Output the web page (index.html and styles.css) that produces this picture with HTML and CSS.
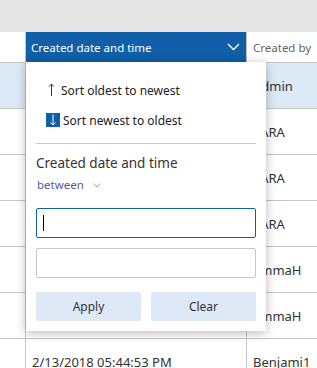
FILE: index.html
```html
<!DOCTYPE html>
<html lang="en">
  <head>
    <meta charset="UTF-8" />
    <title>Created date filter</title>
    <link rel="stylesheet" href="styles.css">
  </head>
  <body>
    <div class="topbar"></div>

    <div class="grid">
      <!-- header row -->
      <div class="row head">
        <div class="cell check"></div>
        <div class="cell date active">
          <span>Created date and time</span>
          <svg class="chev" width="13" height="8" viewBox="0 0 13 8">
            <path d="M1 1 L6.5 6.5 L12 1" fill="none" stroke="#fff" stroke-width="1.4"/>
          </svg>
        </div>
        <div class="cell by">Created by</div>
      </div>

      <div class="row selected">
        <div class="cell check"></div>
        <div class="cell date">2/13/2018 05:52:10 PM</div>
        <div class="cell by">Admin</div>
      </div>
      <div class="row">
        <div class="cell check"></div>
        <div class="cell date">2/13/2018 05:51:32 PM</div>
        <div class="cell by">SARA</div>
      </div>
      <div class="row">
        <div class="cell check"></div>
        <div class="cell date">2/13/2018 05:50:08 PM</div>
        <div class="cell by">SARA</div>
      </div>
      <div class="row">
        <div class="cell check"></div>
        <div class="cell date">2/13/2018 05:48:41 PM</div>
        <div class="cell by">SARA</div>
      </div>
      <div class="row">
        <div class="cell check"></div>
        <div class="cell date">2/13/2018 05:47:19 PM</div>
        <div class="cell by">EmmaH</div>
      </div>
      <div class="row">
        <div class="cell check"></div>
        <div class="cell date">2/13/2018 05:46:02 PM</div>
        <div class="cell by">EmmaH</div>
      </div>
      <div class="row">
        <div class="cell check"></div>
        <div class="cell date">2/13/2018 05:44:53 PM</div>
        <div class="cell by">Benjami1</div>
      </div>

      <!-- filter dropdown -->
      <div class="dropdown">
        <div class="sort">
          <svg class="sort-icon" width="14" height="14" viewBox="0 0 14 14">
            <path d="M5.5 1 V13 M3 3.5 L5.5 1 L8 3.5" fill="none" stroke="#2b3a4a" stroke-width="1"/>
          </svg>
          <span>Sort oldest to newest</span>
        </div>
        <div class="sort">
          <svg class="sort-icon" width="14" height="14" viewBox="0 0 14 14">
            <rect width="14" height="14" fill="#105fa8"/>
            <path d="M7 1.5 V12 M4.5 9.5 L7 12 L9.5 9.5" fill="none" stroke="#fff" stroke-width="1"/>
          </svg>
          <span class="newest">Sort newest to oldest</span>
        </div>

        <div class="divider"></div>

        <div class="filter-title">Created date and time</div>
        <div class="operator">
          between
          <svg width="8" height="5" viewBox="0 0 8 5">
            <path d="M0.5 0.5 L4 4 L7.5 0.5" fill="none" stroke="#a6a6a6" stroke-width="1"/>
          </svg>
        </div>

        <div class="input focus"><span class="caret"></span></div>
        <div class="input"></div>

        <div class="buttons">
          <div class="btn">Apply</div>
          <div class="btn">Clear</div>
        </div>
      </div>
    </div>
  </body>
</html>
```

FILE: styles.css
```css
body {
  margin: 0;
  font-family: "Noto Sans", "Open Sans", sans-serif;
  color: #333;
  background: #fff;
  overflow: hidden;
}

.topbar {
  height: 32px;
  background: #e6e6e6;
}

/* --- grid --- */
.grid {
  position: relative;
}

.row {
  display: flex;
  height: 45px;
  border-bottom: 1px solid #c6c6c6;
  font-size: 13px;
}

.row.head {
  height: 30px;
  font-size: 11.5px;
}

.row.selected {
  background: #dce9f6;
}

.cell {
  display: flex;
  align-items: center;
  box-sizing: border-box;
  white-space: nowrap;
  overflow: hidden;
}

.cell.check {
  width: 26px;
  flex: none;
  border-right: 1px solid #c6c6c6;
}

.cell.date {
  width: 221px;
  flex: none;
  padding-left: 6px;
  border-right: 1px solid #c6c6c6;
}

.cell.by {
  flex: 1;
  padding-left: 6px;
}

.head .cell.by {
  color: #666;
}

.cell.active {
  background: #105fa8;
  color: #fff;
  padding-left: 5px;
  padding-right: 6px;
  justify-content: space-between;
  border-right: 1px solid #bbb;
}

/* --- dropdown --- */
.dropdown {
  position: absolute;
  left: 26px;
  top: 30px;
  width: 240px;
  height: 269px;
  box-sizing: border-box;
  background: #fff;
  box-shadow: 0 2px 10px rgba(0, 0, 0, 0.28);
  padding: 13px 10px 0 10px;
}

.sort {
  display: flex;
  align-items: center;
  gap: 1px;
  height: 30px;
  padding-left: 10px;
  font-size: 12px;
  color: #222;
}

.sort-icon {
  flex: none;
}

.sort .newest {
  margin-left: 2px;
}

.divider {
  height: 1px;
  background: #c8c8c8;
  margin: 8px 0 9px 0;
}

.filter-title {
  font-size: 13.5px;
  color: #333;
  line-height: 20px;
}

.operator {
  display: flex;
  align-items: center;
  gap: 9px;
  font-size: 11.5px;
  color: #5858a8;
  margin-top: 4px;
  padding-left: 1px;
  line-height: 16px;
}

.input {
  height: 30px;
  box-sizing: border-box;
  border: 1px solid #c6c6c6;
  border-radius: 2px;
  margin-top: 10px;
  position: relative;
}

.input.focus {
  margin-top: 15px;
  border-color: #105fa8;
}

.caret {
  position: absolute;
  left: 6px;
  top: 6px;
  width: 1px;
  height: 16px;
  background: #000;
}

.buttons {
  display: flex;
  gap: 10px;
  margin-top: 14px;
}

.btn {
  flex: 1;
  height: 29px;
  display: flex;
  align-items: center;
  justify-content: center;
  background: #dde9f6;
  border-radius: 2px;
  font-size: 12px;
  color: #333;
}
```
